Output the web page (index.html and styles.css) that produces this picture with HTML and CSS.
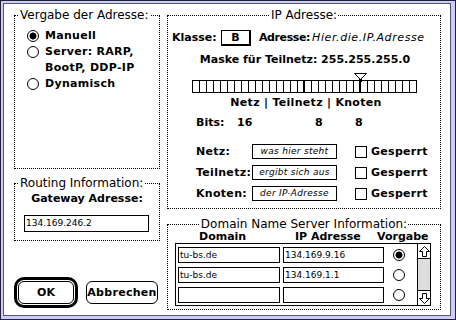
FILE: index.html
```html
<!DOCTYPE html>
<html lang="de">

<head>
    <meta charset="UTF-8">
    <title>MacTCP Konfiguration</title>
    <link rel="stylesheet" href="styles.css">
</head>

<body>
    <div class="frame">
        <div class="dialog">
            <div class="col-left">
                <fieldset class="group group-vergabe">
                    <legend>Vergabe der Adresse:</legend>
                    <div class="option"><span class="radio on"></span><span>Manuell</span></div>
                    <div class="option"><span class="radio"></span><span>Server: RARP,<br>BootP, DDP-IP</span></div>
                    <div class="option"><span class="radio"></span><span>Dynamisch</span></div>
                </fieldset>

                <fieldset class="group group-routing">
                    <legend>Routing Information:</legend>
                    <div class="gw-label">Gateway Adresse:</div>
                    <div class="field gw-field">134.169.246.2</div>
                </fieldset>

                <div class="buttons">
                    <div class="default-ring"><button class="btn btn-ok">OK</button></div>
                    <button class="btn btn-cancel">Abbrechen</button>
                </div>
            </div>

            <div class="col-right">
                <fieldset class="group group-center group-ip">
                    <legend>IP Adresse:</legend>
                    <div class="klasse-row">
                        <span class="klasse-label">Klasse:</span>
                        <span class="klasse-box">B</span>
                        <span class="adresse-label">Adresse:</span>
                        <span class="adresse-value">Hier.die.IP.Adresse</span>
                    </div>
                    <div class="maske">Maske für Teilnetz: 255.255.255.0</div>
                    <div class="scale">
                        <svg class="pointer" width="13" height="9" viewBox="0 0 13 9">
                            <polygon points="0.5,0.5 12.5,0.5 6.5,6.5" fill="#fff" stroke="#000" />
                            <rect x="5" y="6" width="3" height="3" fill="#000" />
                        </svg>
                        <div class="mask-bar"></div>
                    </div>
                    <div class="netz-labels">Netz | Teilnetz | Knoten</div>
                    <div class="bits">
                        <span>Bits:</span><span>16</span><span>8</span><span>8</span>
                    </div>
                    <div class="lock-rows">
                        <div class="lock-row">
                            <span class="lock-label">Netz:</span>
                            <span class="field hint">was hier steht</span>
                            <span class="checkbox"></span>
                            <span>Gesperrt</span>
                        </div>
                        <div class="lock-row">
                            <span class="lock-label">Teilnetz:</span>
                            <span class="field hint">ergibt sich aus</span>
                            <span class="checkbox"></span>
                            <span>Gesperrt</span>
                        </div>
                        <div class="lock-row">
                            <span class="lock-label">Knoten:</span>
                            <span class="field hint">der IP-Adresse</span>
                            <span class="checkbox"></span>
                            <span>Gesperrt</span>
                        </div>
                    </div>
                </fieldset>

                <fieldset class="group group-center group-dns">
                    <legend>Domain Name Server Information:</legend>
                    <div class="dns-head">
                        <span>Domain</span><span>IP Adresse</span><span>Vorgabe</span>
                    </div>
                    <div class="dns-table">
                        <div class="dns-rows">
                            <div class="dns-row">
                                <span class="field dns-domain">tu-bs.de</span>
                                <span class="field dns-ip">134.169.9.16</span>
                                <span class="radio on"></span>
                            </div>
                            <div class="dns-row">
                                <span class="field dns-domain">tu-bs.de</span>
                                <span class="field dns-ip">134.169.1.1</span>
                                <span class="radio"></span>
                            </div>
                            <div class="dns-row">
                                <span class="field dns-domain"></span>
                                <span class="field dns-ip"></span>
                                <span class="radio"></span>
                            </div>
                        </div>
                        <div class="dns-scroll">
                            <div class="arrow arrow-up">
                                <svg width="11" height="11" viewBox="0 0 11 11">
                                    <polygon points="5.5,0.5 10.5,5.5 7.5,5.5 7.5,10.5 3.5,10.5 3.5,5.5 0.5,5.5" fill="#fff" stroke="#000" />
                                </svg>
                            </div>
                            <div class="track"></div>
                            <div class="arrow arrow-down">
                                <svg width="11" height="11" viewBox="0 0 11 11">
                                    <polygon points="5.5,10.5 10.5,5.5 7.5,5.5 7.5,0.5 3.5,0.5 3.5,5.5 0.5,5.5" fill="#fff" stroke="#000" />
                                </svg>
                            </div>
                        </div>
                    </div>
                </fieldset>
            </div>
        </div>
    </div>
</body>

</html>
```

FILE: styles.css
```css
body {
    margin: 0;
    font-family: "DejaVu Sans", sans-serif;
    font-size: 11px;
    font-weight: bold;
    color: #000;
}

/* window frame */
.frame {
    width: 456px;
    height: 320px;
    box-sizing: border-box;
    border: 1px solid #222233;
    background: #ccccff;
    padding: 2px 4px 3px 2px;
}

.dialog {
    height: 100%;
    box-sizing: border-box;
    border: 1px solid #555566;
    background: #fff;
    display: grid;
    grid-template-columns: 146px 274px;
    column-gap: 7px;
    align-items: start;
    padding: 5px 0 0 10px;
}

.col-left,
.col-right {
    display: flex;
    flex-direction: column;
}

/* dotted group boxes */
.group {
    margin: 0;
    padding: 0;
    min-width: 0;
    box-sizing: border-box;
    border: 1px dotted #000;
}

.group legend {
    padding: 0 1px;
    margin-left: 4px;
    font-size: 12px;
    line-height: 12px;
    font-weight: normal;
}

.group-center legend {
    margin: 0 auto;
}

.group-vergabe {
    height: 160px;
}

.group-routing {
    height: 64px;
    margin-top: 8px;
}

.group-ip {
    height: 200px;
}

.group-dns {
    height: 92px;
    margin-top: 9px;
}

/* radios, checkboxes, fields */
.radio {
    flex: none;
    width: 12px;
    height: 12px;
    box-sizing: border-box;
    border: 1px solid #000;
    border-radius: 50%;
    background: #fff;
}

.radio.on {
    background: radial-gradient(circle, #000 0 3.2px, #fff 3.8px);
}

.checkbox {
    flex: none;
    width: 12px;
    height: 12px;
    box-sizing: border-box;
    border: 1px solid #000;
}

.field {
    box-sizing: border-box;
    border: 1px solid #000;
    font-size: 9px;
    font-weight: normal;
    line-height: 13px;
    white-space: nowrap;
    overflow: hidden;
}

/* Vergabe der Adresse */
.option {
    display: flex;
    align-items: flex-start;
    gap: 6px;
    padding-left: 12px;
    line-height: 16px;
    letter-spacing: 0.3px;
}

.option:first-of-type {
    margin-top: 7px;
}

.option .radio {
    margin-top: 2px;
}

/* Routing */
.gw-label {
    margin-top: 3px;
    line-height: 14px;
    text-align: center;
}

.gw-field {
    width: 125px;
    height: 17px;
    margin: 9px 0 0 9px;
    padding-left: 1px;
    line-height: 15px;
}

/* buttons */
.buttons {
    display: flex;
    align-items: center;
    gap: 8px;
    margin-top: 36px;
}

.default-ring {
    border: 3px solid #000;
    border-radius: 10px;
    padding: 1px;
    display: flex;
}

.btn {
    box-sizing: border-box;
    height: 23px;
    border: 1px solid #000;
    border-radius: 6px;
    background: #fff;
    font-family: inherit;
    font-size: 11px;
    font-weight: bold;
    padding: 0;
    color: #000;
}

.btn-ok {
    width: 56px;
}

.btn-cancel {
    width: 72px;
    letter-spacing: 0.3px;
}

/* IP Adresse */
.klasse-row {
    display: flex;
    align-items: center;
    height: 17px;
    margin-top: 8px;
    padding-left: 4px;
}

.klasse-label {
    width: 49px;
}

.klasse-box {
    width: 30px;
    height: 16px;
    box-sizing: border-box;
    border: 1px solid #000;
    border-right-width: 2px;
    border-bottom-width: 2px;
    text-align: center;
    line-height: 13px;
}

.adresse-label {
    margin: 0 2px 0 8px;
    letter-spacing: -0.4px;
    white-space: nowrap;
}

.adresse-value {
    font-size: 11px;
    font-weight: normal;
    font-style: italic;
    letter-spacing: 0.6px;
    white-space: nowrap;
}

.maske {
    margin-top: 7px;
    line-height: 14px;
    text-align: center;
    padding-left: 2px;
}

.scale {
    position: relative;
    margin: 6px 0 0 24px;
    padding-top: 7px;
}

.pointer {
    position: absolute;
    left: 162px;
    top: 0;
}

.mask-bar {
    width: 225px;
    height: 13px;
    box-sizing: border-box;
    border-top: 1px solid #000;
    border-bottom: 1px solid #000;
    background:
        linear-gradient(#000, #000) 111px 0 / 2px 100% no-repeat,
        linear-gradient(#000, #000) 167px 0 / 2px 100% no-repeat,
        repeating-linear-gradient(to right, #000 0 1px, #fff 1px 7px);
}

.netz-labels {
    margin-top: 3px;
    line-height: 14px;
    text-align: center;
    padding-left: 4px;
    letter-spacing: 0.3px;
}

.bits {
    display: grid;
    grid-template-columns: 41px 78px 40px auto;
    margin-top: 6px;
    padding-left: 28px;
    line-height: 14px;
}

.lock-rows {
    display: flex;
    flex-direction: column;
    gap: 6px;
    margin-top: 14px;
    padding-left: 28px;
}

.lock-row {
    display: flex;
    align-items: center;
    height: 15px;
    letter-spacing: 0.3px;
}

.lock-label {
    width: 56px;
}

.hint {
    width: 85px;
    height: 15px;
    font-style: italic;
    letter-spacing: 0.3px;
    text-align: center;
}

.lock-row .checkbox {
    margin: 0 4px 0 18px;
}

/* Domain Name Server */
.dns-head {
    display: grid;
    grid-template-columns: 96px 82px auto;
    padding-left: 31px;
    margin-top: 1px;
    line-height: 12px;
}

.dns-table {
    display: flex;
    width: 256px;
    height: 63px;
    box-sizing: border-box;
    margin: 0 0 0 7px;
    border: 1px solid #000;
}

.dns-rows {
    flex: 1;
    display: flex;
    flex-direction: column;
    gap: 4px;
    padding: 3px 0 0 2px;
}

.dns-row {
    display: flex;
    align-items: center;
    height: 16px;
}

.dns-domain,
.dns-ip {
    height: 16px;
    padding-left: 1px;
    line-height: 14px;
}

.dns-domain {
    width: 102px;
    margin-right: 3px;
}

.dns-ip {
    width: 101px;
}

.dns-row .radio {
    margin-left: 9px;
}

.dns-scroll {
    width: 13px;
    box-sizing: border-box;
    border-left: 1px solid #000;
    display: flex;
    flex-direction: column;
}

.arrow {
    height: 14px;
    display: flex;
    align-items: center;
    justify-content: center;
    background: #fff;
}

.arrow-up {
    border-bottom: 1px solid #000;
}

.arrow-down {
    border-top: 1px solid #000;
}

.track {
    flex: 1;
    background: #dddddd;
}
```
